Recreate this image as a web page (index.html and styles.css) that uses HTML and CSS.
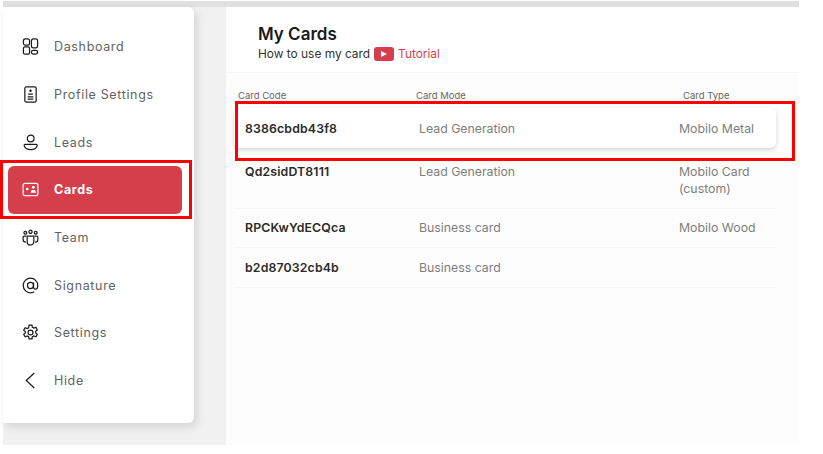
FILE: index.html
```html
<!DOCTYPE html>
<html lang="en">

<head>
    <meta charset="UTF-8">
    <title>My Cards</title>
    <link rel="stylesheet" href="styles.css">
</head>

<body>
    <div class="app">
        <aside class="sidebar">
            <a class="nav-item">
                <svg class="nav-icon" viewBox="0 0 18 18"><rect x="1.500" y="1" width="6.500" height="6.500" rx="2"/><rect x="1.500" y="9.500" width="6.500" height="7.500" rx="1.500"/><rect x="10" y="1" width="6.500" height="9.500" rx="2"/><rect x="10" y="13" width="6.500" height="4" rx="1.800"/></svg>
                Dashboard
            </a>
            <a class="nav-item">
                <svg class="nav-icon" viewBox="0 0 18 18"><rect x="3" y="1" width="12" height="16" rx="1.500"/><circle class="solid" cx="9" cy="5" r="1.300"/><path d="M6.500 8.500h5M6 11.500h6M6 14h6"/></svg>
                Profile Settings
            </a>
            <a class="nav-item">
                <svg class="nav-icon" viewBox="0 0 18 18"><circle cx="9.200" cy="4.800" r="3.600"/><path d="M3.500 11h11.400c1 0 1.400.8 1.100 1.700-.7 2-3.400 3.800-6.800 3.800s-6-1.800-6.800-3.800c-.3-.9.1-1.700 1.100-1.700z"/></svg>
                Leads
            </a>
            <a class="nav-item active">
                <svg class="nav-icon" viewBox="0 0 18 18"><rect x="1.200" y="2.500" width="15.600" height="13" rx="2"/><circle class="solid" cx="5.500" cy="8.500" r="1.400"/><circle class="solid" cx="12" cy="6.700" r="1.500"/><path class="solid" d="M9.300 12.500c0-2 1.200-3.300 2.700-3.300s2.700 1.300 2.700 3.300z"/></svg>
                Cards
            </a>
            <a class="nav-item">
                <svg class="nav-icon" viewBox="0 0 18 18"><circle cx="3.500" cy="4" r="1.500"/><circle cx="9" cy="3" r="1.700"/><circle cx="14.500" cy="4" r="1.500"/><path d="M5.500 7.500h7v6a3.500 3.500 0 0 1-7 0zM4.500 7.500h-2c-.8 0-1.300.5-1.300 1.300v2.700c0 1.500 1.300 2.500 3 2.500M13.500 7.500h2c.8 0 1.300.5 1.300 1.300v2.700c0 1.500-1.300 2.500-3 2.500"/></svg>
                Team
            </a>
            <a class="nav-item">
                <svg class="nav-icon" viewBox="0 0 18 18"><circle cx="9" cy="9" r="3.200"/><path d="M12.200 5.800v4.700c0 1.500 1 2.300 2.200 2.300s2.300-1.200 2.300-3.800A7.700 7.700 0 1 0 9 16.700c1.600 0 2.800-.3 4-1"/></svg>
                Signature
            </a>
            <a class="nav-item">
                <svg class="nav-icon" viewBox="0 0 18 18"><circle cx="9" cy="9" r="2.600"/><path d="M7.500 1.200h3l.5 2.300 1.500.8 2.200-.8 1.500 2.600-1.700 1.500v1.800l1.700 1.500-1.500 2.600-2.200-.8-1.500.8-.5 2.300h-3l-.5-2.300-1.500-.8-2.200.8-1.500-2.600 1.700-1.500V8.100L1.800 6.600l1.500-2.600 2.200.8 1.500-.8z"/></svg>
                Settings
            </a>
            <a class="nav-item">
                <svg class="nav-icon" viewBox="0 0 18 18"><path d="M13 1 4.500 9l8.500 8"/></svg>
                Hide
            </a>
        </aside>

        <main class="content">
            <header class="content-head">
                <h1>My Cards</h1>
                <p class="subtitle">
                    How to use my card
                    <span class="play-btn"><span class="play-arrow"></span></span>
                    <span class="tutorial">Tutorial</span>
                </p>
            </header>

            <div class="cards-table">
                <div class="row labels">
                    <span>Card Code</span>
                    <span>Card Mode</span>
                    <span>Card Type</span>
                </div>
                <div class="row card-row selected">
                    <span class="code">8386cbdb43f8</span>
                    <span>Lead Generation</span>
                    <span>Mobilo Metal</span>
                </div>
                <div class="row card-row tall">
                    <span class="code">Qd2sidDT8111</span>
                    <span>Lead Generation</span>
                    <span>Mobilo Card (custom)</span>
                </div>
                <div class="row card-row">
                    <span class="code">RPCKwYdECQca</span>
                    <span>Business card</span>
                    <span>Mobilo Wood</span>
                </div>
                <div class="row card-row">
                    <span class="code">b2d87032cb4b</span>
                    <span>Business card</span>
                    <span></span>
                </div>
            </div>
        </main>
    </div>

    <!-- red marks drawn over the screenshot -->
    <div class="mark mark-nav"></div>
    <div class="mark mark-row"></div>
</body>

</html>
```

FILE: styles.css
```css
body {
    margin: 0;
    background: #ffffff;
    font-family: "Inter", "Liberation Sans", sans-serif;
    height: 454px;
    overflow: hidden;
}

.app {
    margin: 1px 0 0 3px;
    width: 796px;
    height: 438px;
    background: #f1f1f1;
    border-top: 6px solid #dfe0df;
    display: flex;
    gap: 32px;
}

.sidebar {
    width: 191px;
    height: 416px;
    box-sizing: border-box;
    padding: 16px 12px 0 5px;
    background: #ffffff;
    border-radius: 0 6px 6px 0;
    box-shadow: 3px 4px 10px rgba(0, 0, 0, 0.12);
}

.nav-item {
    display: flex;
    align-items: center;
    gap: 15px;
    height: 47.7px;
    padding-left: 14px;
    box-sizing: border-box;
    border-radius: 6px;
    color: #636363;
    font-size: 12.5px;
    letter-spacing: 0.65px;
}

.nav-item.active {
    background: #d43f4b;
    color: #ffffff;
    font-weight: 700;
}

.nav-icon {
    width: 17px;
    height: 17px;
    fill: none;
    stroke: #1c1c1c;
    stroke-width: 1.300;
    flex-shrink: 0;
}

.nav-icon .solid {
    fill: #1c1c1c;
    stroke: none;
}

.active .nav-icon {
    stroke: #ffffff;
}

.active .nav-icon .solid {
    fill: #ffffff;
}

.content {
    flex: 1;
    background: #fdfdfd;
}

.content-head {
    height: 66px;
    box-sizing: border-box;
    padding: 17px 0 0 32px;
    background: #ffffff;
    border-bottom: 1px solid #f5f5f5;
}

h1 {
    margin: 0;
    font-size: 17px;
    font-weight: 600;
    line-height: 21px;
    color: #1a1a1a;
}

.subtitle {
    margin: 1px 0 0;
    display: flex;
    align-items: center;
    gap: 4px;
    font-size: 11.900px;
    line-height: 16px;
    color: #333333;
}

.play-btn {
    width: 20px;
    height: 14px;
    border-radius: 3px;
    background: #d43f4b;
    display: flex;
    align-items: center;
    justify-content: center;
}

.play-arrow {
    border-left: 6px solid #ffffff;
    border-top: 3.500px solid transparent;
    border-bottom: 3.500px solid transparent;
}

.tutorial {
    color: #d43f4b;
}

.cards-table {
    width: 542px;
    margin-left: 8px;
}

.row {
    display: grid;
    grid-template-columns: 174px 260px 1fr;
    padding: 0 11px;
}

.labels {
    height: 35px;
    padding: 17px 0 0 4px;
    box-sizing: border-box;
    grid-template-columns: 178px 267px 1fr;
    font-size: 9.500px;
    line-height: 12px;
    color: #666666;
}

.card-row {
    height: 39.500px;
    align-items: center;
    box-sizing: border-box;
    border-bottom: 1px solid #f6f6f6;
    font-size: 12.300px;
    line-height: 17px;
    color: #7d7d7d;
}

.card-row.selected {
    height: 40px;
    border-bottom: none;
    border-radius: 6px;
    background: #ffffff;
    box-shadow: 0 2px 4px rgba(0, 0, 0, 0.16);
    margin-bottom: 12px;
}

.card-row.tall {
    height: 48.500px;
    padding-top: 3px;
    align-items: start;
}

.code {
    font-weight: 600;
    color: #2b2b2b;
    letter-spacing: 0.15px;
}

.mark {
    position: absolute;
    box-sizing: border-box;
    border: 3px solid #ff0000;
}

.mark-nav {
    left: 0;
    top: 160px;
    width: 192px;
    height: 59px;
}

.mark-row {
    left: 235px;
    top: 101px;
    width: 560px;
    height: 60px;
}
```
